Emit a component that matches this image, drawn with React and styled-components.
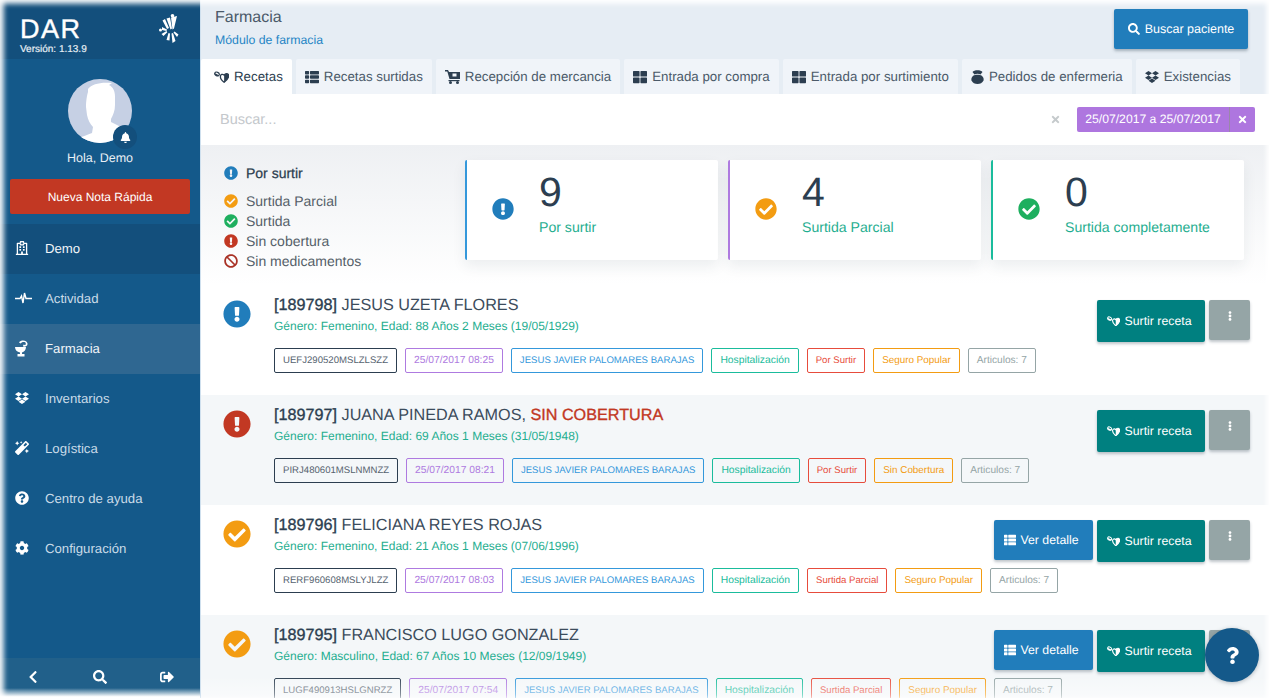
import styled, { createGlobalStyle } from "styled-components";
import {
  FaBan,
  FaBell,
  FaCheckCircle,
  FaChevronLeft,
  FaCog,
  FaDropbox,
  FaEllipsisV,
  FaExclamationCircle,
  FaMagic,
  FaQuestion,
  FaQuestionCircle,
  FaRegHospital,
  FaSearch,
  FaSignOutAlt,
  FaThLarge,
  FaThList,
  FaTimes,
} from "react-icons/fa";

const GlobalStyle = createGlobalStyle`
  html, body {
    margin: 0;
    height: 100%;
    overflow: hidden;
    background: #fff;
    font-family: "Liberation Sans", Arial, sans-serif;
    text-rendering: geometricPrecision;
  }
  * { box-sizing: border-box; }
  button { text-rendering: geometricPrecision; }
`;

const Page = styled.div`
  display: flex;
  width: 100vw;
  height: 100vh;
  overflow: hidden;
`;

/* window shadow of the original capture, lies over everything */
const WindowEdge = styled.div`
  position: fixed;
  inset: 0;
  pointer-events: none;
  z-index: 5;
  box-shadow: inset 5px 0 5px -1px rgba(255, 255, 255, 0.85),
    inset 0 5px 5px -1px rgba(255, 255, 255, 0.85),
    inset -5px 0 4px -2px rgba(255, 255, 255, 0.8);
`;

const Sidebar = styled.aside`
  flex: 0 0 200px;
  display: flex;
  flex-direction: column;
  background: #14598a;
  color: #fff;
`;

const Brand = styled.div`
  height: 59px;
  padding: 16px 20px 0 20px;
  background: #134f7c;
  display: flex;
  justify-content: space-between;
`;

const BrandName = styled.div`
  font-size: 27px;
  line-height: 26px;
  letter-spacing: 1.5px;
  -webkit-text-stroke: 0.4px #fff;
`;

const Version = styled.div`
  font-size: 10px;
  line-height: 12px;
  margin-top: 2px;
  color: #e6eef4;
  -webkit-text-stroke: 0.2px #e6eef4;
`;

const BrandMark = styled.svg`
  width: 20px;
  height: 30px;
  margin: -2px 1px 0 0;
`;

const Profile = styled.div`
  height: 165px;
  padding: 20px 10px 0;
  display: flex;
  flex-direction: column;
  align-items: center;
`;

const Avatar = styled.div`
  position: relative;
  width: 64px;
  height: 64px;
`;

const AvatarImage = styled.svg`
  display: block;
  width: 64px;
  height: 64px;
  border-radius: 50%;
  background: #c6d0e4;
`;

const BellBadge = styled.span`
  position: absolute;
  right: -5px;
  bottom: -6px;
  width: 24px;
  height: 24px;
  border-radius: 50%;
  background: #134f7c;
  display: flex;
  align-items: center;
  justify-content: center;
  font-size: 11px;
`;

const Greeting = styled.div`
  font-size: 12.5px;
  line-height: 16px;
  margin-top: 7px;
  color: #e8eff5;
`;

const NoteButton = styled.button`
  width: 180px;
  height: 35px;
  margin-top: 13px;
  border: 0;
  border-radius: 2px;
  background: #c23823;
  color: #fff;
  font: 12px "Liberation Sans", Arial, sans-serif;
`;

const Nav = styled.nav`
  flex: 1;
`;

const NavItem = styled.div`
  height: 50px;
  display: flex;
  align-items: center;
  padding: 0 0 2px 15px;
  font-size: 13.2px;
  color: ${(p) => (p.$light ? "#f2f6f9" : "#c9dbe8")};
  background: ${(p) => p.$bg || "transparent"};
`;

const NavIcon = styled.span`
  width: 30px;
  display: flex;
  align-items: center;
  color: #fff;
  font-size: 14px;
`;

const SideFooter = styled.div`
  height: 40px;
  background: linear-gradient(to bottom, #21608a 0, #21608a 75%, #fff 97%);
  display: grid;
  grid-template-columns: repeat(3, 1fr);
  justify-items: center;
  padding-top: 12px;
  font-size: 14px;
`;

const Main = styled.main`
  flex: 1;
  min-width: 0;
  display: flex;
  flex-direction: column;
  border-left: 1px solid #cfe0ee;
  position: relative;
`;

const BottomFade = styled.div`
  position: absolute;
  left: 0;
  right: 0;
  bottom: 0;
  height: 22px;
  background: linear-gradient(to bottom, rgba(255, 255, 255, 0), rgba(255, 255, 255, 0.5));
  pointer-events: none;
  z-index: 2;
`;

const TopBar = styled.header`
  height: 94px;
  background: #e6edf4;
  position: relative;
`;

const TitleRow = styled.div`
  height: 59px;
  padding: 9px 21px 0 14px;
  display: flex;
  justify-content: space-between;
`;

const PageTitle = styled.div`
  font-size: 16px;
  line-height: 18px;
  color: #4b5a69;
`;

const PageSubtitle = styled.div`
  font-size: 12.3px;
  line-height: 16px;
  margin-top: 5px;
  color: #2585c5;
`;

const SearchPatient = styled.button`
  width: 134px;
  height: 40px;
  border: 0;
  border-radius: 2px;
  background: #217dbb;
  color: #fff;
  font: 12.5px "Liberation Sans", Arial, sans-serif;
  display: flex;
  align-items: center;
  justify-content: center;
  gap: 5px;
  box-shadow: 0 2px 3px rgba(44, 62, 80, 0.35);
`;

const Tabs = styled.div`
  display: flex;
  gap: 4px;
`;

const Tab = styled.div`
  height: 35px;
  display: flex;
  align-items: center;
  gap: 5px;
  padding: 0 9px 0 ${(p) => (p.$active ? "13px" : "9px")};
  border-radius: 2px 2px 0 0;
  font-size: 13.3px;
  white-space: nowrap;
  color: ${(p) => (p.$active ? "#2c3e50" : "#4b5a69")};
  background: ${(p) => (p.$active ? "#fff" : "#f0f4f9")};
`;

const TabIcon = styled.span`
  display: flex;
  align-items: center;
  justify-content: center;
  color: #2c3e50;
  font-size: 14px;
`;

const SearchBar = styled.div`
  height: 51px;
  background: #fff;
  display: flex;
  align-items: center;
  padding: 0 14px 0 19px;
`;

const SearchInput = styled.div`
  flex: 1;
  padding-top: 1px;
  font-size: 14.5px;
  color: #c4c8cc;
`;

const ClearButton = styled.span`
  width: 29px;
  height: 25px;
  margin-right: 7px;
  display: flex;
  align-items: center;
  justify-content: center;
  font-size: 11px;
  color: #c5cacc;
`;

const DateFilter = styled.div`
  width: 178px;
  height: 25px;
  display: flex;
  align-items: center;
  border-radius: 2px;
  background: #ae76df;
  color: #fff;
  font-size: 12.2px;
`;

const DateText = styled.span`
  flex: 1;
  text-align: center;
  border-right: 1px solid #9a88a8;
  line-height: 25px;
`;

const DateClear = styled.span`
  width: 25px;
  display: flex;
  justify-content: center;
  font-size: 11px;
`;

const Stats = styled.section`
  height: 140px;
  padding: 15px 0 0 23px;
  display: flex;
  background: linear-gradient(to bottom, #eef0f3, #fff);
`;

const Legend = styled.div`
  width: 241px;
  padding-top: 3px;
`;

const LegendItem = styled.div`
  display: flex;
  align-items: center;
  gap: 8px;
  height: 20px;
  margin-bottom: ${(p) => (p.$head ? "8px" : "0")};
  font-size: 14px;
  font-weight: ${(p) => (p.$head ? 500 : 400)};
  color: ${(p) => (p.$head ? "#2c3e50" : "#555f69")};
  -webkit-text-stroke: ${(p) => (p.$head ? "0.25px #2c3e50" : "0")};
`;

const Cards = styled.div`
  display: flex;
  gap: 10px;
`;

const Card = styled.div`
  width: 253px;
  height: 100px;
  padding: 10px 0 0 25px;
  display: flex;
  align-items: flex-start;
  border-left: 2px solid ${(p) => p.$line};
  border-radius: 2px;
  background: #fff;
  box-shadow: 0 6px 14px rgba(44, 62, 80, 0.08);
`;

const CardIcon = styled.span`
  width: 47px;
  margin-top: 28px;
  display: flex;
  font-size: 22px;
`;

const CardNumber = styled.div`
  font-size: 41px;
  line-height: 44px;
  color: #2c3e50;
`;

const CardLabel = styled.div`
  font-size: 14.1px;
  line-height: 20px;
  margin-top: 3px;
  color: #1fae90;
`;

const RowList = styled.div`
  flex: 1;
  overflow: hidden;
`;

const Row = styled.article`
  height: 110px;
  padding: 10px 19px 0 22px;
  display: flex;
  background: ${(p) => (p.$even ? "#f4f7f9" : "#fff")};
`;

const RowIcon = styled.span`
  width: 51px;
  margin-top: 5px;
  display: flex;
  font-size: 28px;
  align-items: flex-start;
`;

const RowBody = styled.div`
  flex: 1;
  min-width: 0;
`;

const RowTitle = styled.div`
  font-size: 16.2px;
  line-height: 20px;
  color: #3c4c5c;
`;

const Folio = styled.span`
  color: #2c3e50;
  -webkit-text-stroke: 0.35px #2c3e50;
`;

const Warning = styled.span`
  color: #c23823;
  -webkit-text-stroke: 0.35px #c23823;
`;

const RowInfo = styled.div`
  font-size: 12px;
  line-height: 18px;
  margin-top: 2px;
  color: #1fae90;
`;

const TagRow = styled.div`
  display: flex;
  gap: 8px;
  margin-top: 13px;
`;

const Tag = styled.span`
  height: 25px;
  display: flex;
  align-items: center;
  padding: 0 8px;
  border: 1px solid ${(p) => p.$line};
  border-radius: 2px;
  font-size: ${(p) => p.$size}px;
  color: ${(p) => p.$text || p.$line};
  white-space: nowrap;
  background: transparent;
`;

const Actions = styled.div`
  display: flex;
  align-items: flex-start;
  gap: 4px;
  margin-top: 5px;
`;

const ActionButton = styled.button`
  height: ${(p) => p.$h || 40}px;
  width: ${(p) => p.$w}px;
  padding: 0 0 0 10px;
  border: 0;
  border-radius: 2px;
  background: ${(p) => p.$bg};
  color: #fff;
  font: 12.3px "Liberation Sans", Arial, sans-serif;
  display: flex;
  align-items: center;
  gap: 4.5px;
  box-shadow: 0 2px 3px rgba(44, 62, 80, 0.3);
`;

const KebabButton = styled(ActionButton)`
  padding: 0 0 8px;
  justify-content: center;
  font-size: 10px;
`;

const HelpButton = styled.button`
  position: fixed;
  left: 1205px;
  top: 628px;
  width: 54px;
  height: 54px;
  border: 0;
  border-radius: 50%;
  background: #14598a;
  color: #fff;
  display: flex;
  align-items: center;
  justify-content: center;
  font-size: 16px;
  z-index: 6;
  box-shadow: 0 1px 4px rgba(44, 62, 80, 0.35);
`;

const PillsIcon = ({ size = 15 }) => (
  <svg width={size} height={size * 0.8} viewBox="0 0 20 16" fill="currentColor">
    <ellipse cx="4" cy="4" rx="3.200" ry="2.400" fill="none" stroke="currentColor" strokeWidth="1.500" transform="rotate(25 4 4)" />
    <path d="M1.500 3l5 2.500-1 1.500-4.500-2z" />
    <path d="M8.500 7.500C8.500 4.500 11.500 3.500 13.500 5.500 15.500 2.500 19.500 3 19.500 6.500 19.500 10 16 13 13.500 15 11 13 8.500 10.500 8.500 7.500z" fill="none" stroke="currentColor" strokeWidth="1.800" />
    <path d="M13.500 5.500C15.500 2.500 19.500 3 19.500 6.500 19.500 10 16 13 13.500 15z" />
  </svg>
);

const PulseIcon = () => (
  <svg width="17" height="12" viewBox="0 0 17 12" fill="none" stroke="currentColor" strokeWidth="1.4">
    <path d="M0 6.500h5l1.500-2.500 1.500 7 1.500-10 1.500 5.500h6" />
  </svg>
);

const BowlIcon = () => (
  <svg width="14" height="17" viewBox="0 0 14 17" fill="currentColor">
    <path d="M4 2.500C6-.5 12 0 12.500 3.500 13 6.500 9.500 7 8 6.500l.3-1.700c1.500.4 2.700 0 2.500-1.300C10.500 1.700 7.500 1.500 5.700 3.500z" />
    <path d="M0 7h11c0 3-2 5-4 5.500V14h2.500v2.500H2.500V14H5v-1.500C2 12 0 10 0 7z" />
  </svg>
);

const CartIcon = () => (
  <svg width="15" height="14" viewBox="0 0 15 14" fill="currentColor">
    <path d="M0 0h3l1 2h11v7H4.500L2.300 1.500H0z" />
    <rect x="7.500" y="3.500" width="4" height="3" fill="#f0f4f9" />
    <rect x="3.500" y="10" width="11" height="1.200" />
    <circle cx="5.500" cy="12.500" r="1.500" />
    <circle cx="12.500" cy="12.500" r="1.500" />
  </svg>
);

const NurseIcon = () => (
  <svg width="13" height="15" viewBox="0 0 13 15" fill="currentColor">
    <path d="M1.500 3C3 .5 10 .5 11.500 3L9.500 5.500C8 4.500 5 4.500 3.500 5.500z" />
    <path d="M2.500 6.500C4 5.500 9 5.500 10.500 6.500 12.500 8 13 10 12.500 11.500 11.500 14 9 15 6.500 15S1.500 14 .5 11.500C0 10 .5 8 2.500 6.500z" />
  </svg>
);

const status = {
  info: { Icon: FaExclamationCircle, color: "#217dbb" },
  partial: { Icon: FaCheckCircle, color: "#f39c12" },
  done: { Icon: FaCheckCircle, color: "#1eaf5f" },
  none: { Icon: FaExclamationCircle, color: "#c23823" },
  empty: { Icon: FaBan, color: "#a93226" },
};

const StatusIcon = ({ kind }) => {
  const { Icon, color } = status[kind];
  return <Icon color={color} />;
};

const navItems = [
  { label: "Demo", icon: <FaRegHospital />, bg: "#134f7c", light: true },
  { label: "Actividad", icon: <PulseIcon /> },
  { label: "Farmacia", icon: <BowlIcon />, bg: "#2f6791", light: true },
  { label: "Inventarios", icon: <FaDropbox /> },
  { label: "Logística", icon: <FaMagic /> },
  { label: "Centro de ayuda", icon: <FaQuestionCircle /> },
  { label: "Configuración", icon: <FaCog /> },
];

const tabs = [
  { label: "Recetas", icon: <PillsIcon />, active: true },
  { label: "Recetas surtidas", icon: <FaThList /> },
  { label: "Recepción de mercancia", icon: <CartIcon /> },
  { label: "Entrada por compra", icon: <FaThLarge /> },
  { label: "Entrada por surtimiento", icon: <FaThLarge /> },
  { label: "Pedidos de enfermeria", icon: <NurseIcon /> },
  { label: "Existencias", icon: <FaDropbox /> },
];

const cards = [
  { value: 9, label: "Por surtir", kind: "info", line: "#3498db" },
  { value: 4, label: "Surtida Parcial", kind: "partial", line: "#ae7ae0" },
  { value: 0, label: "Surtida completamente", kind: "done", line: "#1abc9c" },
];

const rows = [
  {
    folio: "189798",
    name: "JESUS UZETA FLORES",
    kind: "info",
    info: "Género: Femenino, Edad: 88 Años 2 Meses (19/05/1929)",
    curp: "UEFJ290520MSLZLSZZ",
    date: "25/07/2017 08:25",
    state: "Por Surtir",
    cover: "Seguro Popular",
  },
  {
    folio: "189797",
    name: "JUANA PINEDA RAMOS,",
    warning: "SIN COBERTURA",
    kind: "none",
    info: "Género: Femenino, Edad: 69 Años 1 Meses (31/05/1948)",
    curp: "PIRJ480601MSLNMNZZ",
    date: "25/07/2017 08:21",
    state: "Por Surtir",
    cover: "Sin Cobertura",
  },
  {
    folio: "189796",
    name: "FELICIANA REYES ROJAS",
    kind: "partial",
    info: "Género: Femenino, Edad: 21 Años 1 Meses (07/06/1996)",
    curp: "RERF960608MSLYJLZZ",
    date: "25/07/2017 08:03",
    state: "Surtida Parcial",
    cover: "Seguro Popular",
    detail: true,
  },
  {
    folio: "189795",
    name: "FRANCISCO LUGO GONZALEZ",
    kind: "partial",
    info: "Género: Masculino, Edad: 67 Años 10 Meses (12/09/1949)",
    curp: "LUGF490913HSLGNRZZ",
    date: "25/07/2017 07:54",
    state: "Surtida Parcial",
    cover: "Seguro Popular",
    detail: true,
  },
];

const App = () => {
  return (
    <Page>
      <GlobalStyle />
      <Sidebar>
        <Brand>
          <div>
            <BrandName>DAR</BrandName>
            <Version>Versión: 1.13.9</Version>
          </div>
          <BrandMark viewBox="0 0 20 30" fill="#fff">
            <circle cx="13.500" cy="1.800" r="1.800" />
            <path d="M3.500 6.500l2.500-1.500 4 9-2 1zM7.500 4.500l3.500-1 2 11-1.500 1zM12 3.500l6-1.500-3 12.500-1.500 1z" />
            <circle cx="1.500" cy="16" r="1.500" />
            <path d="M3 13l5 2.500-.5 1.500-4.500-1zM2.500 20l5-3 .8 1.200-3.800 3.800zM7.500 26l2-7 1.500.5-.5 7zM13.500 29l-1-9.500 1.500-.5 2.500 8zM18 23l-3.500-4.500 1-1 4 3z" />
          </BrandMark>
        </Brand>
        <Profile>
          <Avatar>
            <AvatarImage viewBox="0 0 64 64">
              <path
                fill="#fff"
                d="M20 10c4-5 12-7 24-6l-3 2c4 2 6 6 6 12v8c0 6-2 10-4 14v3l16 8v13H10v-4c4-3 10-4 14-6l1-6c-3-3-5-7-6-12l-1-8c0-6 1-12 2-15z"
              />
            </AvatarImage>
            <BellBadge>
              <FaBell />
            </BellBadge>
          </Avatar>
          <Greeting>Hola, Demo</Greeting>
          <NoteButton>Nueva Nota Rápida</NoteButton>
        </Profile>
        <Nav>
          {navItems.map((item) => (
            <NavItem key={item.label} $bg={item.bg} $light={item.light}>
              <NavIcon>{item.icon}</NavIcon>
              {item.label}
            </NavItem>
          ))}
        </Nav>
        <SideFooter>
          <FaChevronLeft />
          <FaSearch />
          <FaSignOutAlt />
        </SideFooter>
      </Sidebar>
      <Main>
        <TopBar>
          <TitleRow>
            <div>
              <PageTitle>Farmacia</PageTitle>
              <PageSubtitle>Módulo de farmacia</PageSubtitle>
            </div>
            <SearchPatient>
              <FaSearch size={12} />
              Buscar paciente
            </SearchPatient>
          </TitleRow>
          <Tabs>
            {tabs.map((tab) => (
              <Tab key={tab.label} $active={tab.active}>
                <TabIcon>{tab.icon}</TabIcon>
                {tab.label}
              </Tab>
            ))}
          </Tabs>
        </TopBar>
        <SearchBar>
          <SearchInput>Buscar...</SearchInput>
          <ClearButton>
            <FaTimes />
          </ClearButton>
          <DateFilter>
            <DateText>25/07/2017 a 25/07/2017</DateText>
            <DateClear>
              <FaTimes />
            </DateClear>
          </DateFilter>
        </SearchBar>
        <Stats>
          <Legend>
            <LegendItem $head>
              <StatusIcon kind="info" />
              Por surtir
            </LegendItem>
            <LegendItem>
              <StatusIcon kind="partial" />
              Surtida Parcial
            </LegendItem>
            <LegendItem>
              <StatusIcon kind="done" />
              Surtida
            </LegendItem>
            <LegendItem>
              <StatusIcon kind="none" />
              Sin cobertura
            </LegendItem>
            <LegendItem>
              <StatusIcon kind="empty" />
              Sin medicamentos
            </LegendItem>
          </Legend>
          <Cards>
            {cards.map((card) => (
              <Card key={card.label} $line={card.line}>
                <CardIcon>
                  <StatusIcon kind={card.kind} />
                </CardIcon>
                <div>
                  <CardNumber>{card.value}</CardNumber>
                  <CardLabel>{card.label}</CardLabel>
                </div>
              </Card>
            ))}
          </Cards>
        </Stats>
        <RowList>
          {rows.map((row, i) => (
            <Row key={row.folio} $even={i % 2 === 1}>
              <RowIcon>
                <StatusIcon kind={row.kind} />
              </RowIcon>
              <RowBody>
                <RowTitle>
                  <Folio>[{row.folio}]</Folio> {row.name}
                  {row.warning && <Warning> {row.warning}</Warning>}
                </RowTitle>
                <RowInfo>{row.info}</RowInfo>
                <TagRow>
                  <Tag $line="#2c3e50" $text="#56636f" $size={9.6}>{row.curp}</Tag>
                  <Tag $line="#ae7ae0" $size={10.25}>{row.date}</Tag>
                  <Tag $line="#3498db" $size={9.6}>JESUS JAVIER PALOMARES BARAJAS</Tag>
                  <Tag $line="#1abc9c" $size={10.3}>Hospitalización</Tag>
                  <Tag $line="#e74c3c" $size={9.6}>{row.state}</Tag>
                  <Tag $line="#f39c12" $size={9.9}>{row.cover}</Tag>
                  <Tag $line="#95a5a6" $size={10.15}>Articulos: 7</Tag>
                </TagRow>
              </RowBody>
              <Actions>
                {row.detail && (
                  <ActionButton $w={99} $bg="#217dbb">
                    <FaThList size={12} />
                    Ver detalle
                  </ActionButton>
                )}
                <ActionButton $w={108} $h={42} $bg="#008080">
                  <PillsIcon size={13} />
                  Surtir receta
                </ActionButton>
                <KebabButton $w={41} $bg="#95a5a6" aria-label="Más opciones">
                  <FaEllipsisV />
                </KebabButton>
              </Actions>
            </Row>
          ))}
        </RowList>
        <BottomFade />
      </Main>
      <HelpButton aria-label="Ayuda">
        <FaQuestion size={17} />
      </HelpButton>
      <WindowEdge />
    </Page>
  );
};

export default App;
